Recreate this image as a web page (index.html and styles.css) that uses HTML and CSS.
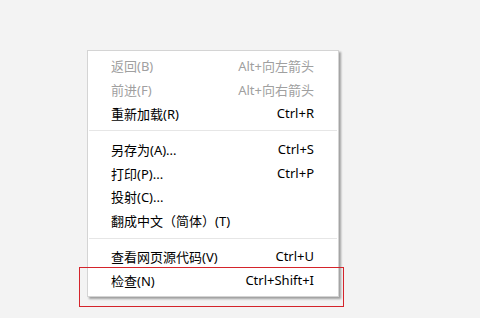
FILE: index.html
```html
<!DOCTYPE html>
<html>
<head>
  <title>右键菜单</title>
  <link rel="stylesheet" href="styles.css">
</head>
<body>
  <div class="page">
    <div class="context-menu">
      <div class="menu-item disabled"><span>返回(B)</span><span class="shortcut">Alt+向左箭头</span></div>
      <div class="menu-item disabled"><span>前进(F)</span><span class="shortcut">Alt+向右箭头</span></div>
      <div class="menu-item"><span>重新加载(R)</span><span class="shortcut">Ctrl+R</span></div>
      <div class="separator"></div>
      <div class="menu-item"><span>另存为(A)...</span><span class="shortcut">Ctrl+S</span></div>
      <div class="menu-item"><span>打印(P)...</span><span class="shortcut">Ctrl+P</span></div>
      <div class="menu-item"><span>投射(C)...</span></div>
      <div class="menu-item"><span>翻成中文（简体）(T)</span></div>
      <div class="separator"></div>
      <div class="menu-item"><span>查看网页源代码(V)</span><span class="shortcut">Ctrl+U</span></div>
      <div class="menu-item"><span>检查(N)</span><span class="shortcut">Ctrl+Shift+I</span></div>
    </div>
    <!-- red highlight box round the last item -->
    <div class="highlight"></div>
  </div>
</body>
</html>
```
FILE: styles.css
```css
/* context menu screenshot */
body {
  margin: 0;
  font-family: "Noto Sans", "Noto Sans CJK SC", sans-serif;
  font-size: 13px;
  color: #000;
  background-color: #f3f3f3;
}

.page {
  position: relative;
  height: 318px;
  padding: 50px 0 0 87px;
  box-sizing: border-box;
}

.context-menu {
  width: 252px;
  box-sizing: border-box;
  padding: 3px 0 4px 0;
  background-color: #fff;
  border: 1px solid #d4d4d4;
  box-shadow: 2px 2px 2px rgba(0, 0, 0, 0.35);
}

.menu-item {
  display: flex;
  justify-content: space-between;
  align-items: center;
  height: 23.8px;
  padding: 0 24px 0 23px;
  white-space: nowrap;
}

.menu-item.disabled {
  color: #a0a0a0;
}

.separator {
  height: 1px;
  margin: 5px 1px 6px 1px;
  background-color: #e6e6e6;
}

.highlight {
  position: absolute;
  left: 79px;
  top: 267px;
  width: 263px;
  height: 38px;
  border: 1px solid #d4242b;
}
```
